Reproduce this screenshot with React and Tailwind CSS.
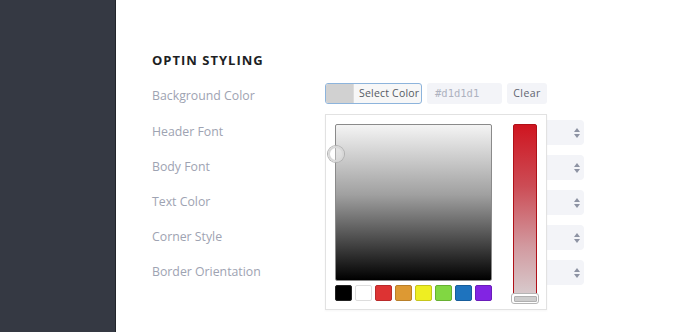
import React from 'react';

const swatches = [
  ['#000000', '#222222'],
  ['#ffffff', '#dddddd'],
  ['#dd3333', '#b92a2a'],
  ['#dd9933', '#b97f2a'],
  ['#eeee22', '#c6c61c'],
  ['#81d742', '#67b032'],
  ['#1e73be', '#175d9b'],
  ['#8224e3', '#6a1dba'],
];

const rows = ['Header Font', 'Body Font', 'Text Color', 'Corner Style', 'Border Orientation'];

function SelectArrows() {
  return (
    <svg width="8" height="12" viewBox="0 0 8 12" className="absolute right-[3px] top-1/2 -translate-y-1/2">
      <path d="M4 1 L7 5 L1 5 Z" fill="#8d93a3" />
      <path d="M4 11 L7 7 L1 7 Z" fill="#8d93a3" />
    </svg>
  );
}

function ColorPopup() {
  return (
    <div className="absolute left-0 top-[31px] z-10 w-[222px] h-[196px] bg-white border border-[#e2e2e2] shadow-[0_1px_2px_rgba(0,0,0,0.04)]">
      <div className="relative flex pl-[9px] pt-[9px]">
        <div className="flex flex-col">
          <div className="w-[157px] h-[157px] rounded-[2px] border border-[#8a8a8a] bg-[linear-gradient(to_bottom,#f4f4f4_0%,#a0a0a0_45%,#000000_100%)]" />
          <div className="flex gap-[3px] mt-[4px]">
            {swatches.map(([c, b]) => (
              <div
                key={c}
                className="w-[17px] h-[16px] rounded-[2px] border"
                style={{ backgroundColor: c, borderColor: b }}
              />
            ))}
          </div>
        </div>
        <div className="relative ml-[21px] w-[24px] h-[176px] rounded-[2px] border border-[#b01018] bg-[linear-gradient(to_bottom,#cf1520_0%,#cc4c55_35%,#d29aa0_70%,#d8cfd1_100%)]" />
        <div className="absolute left-[185px] top-[178px] w-[28px] h-[11px] rounded-[3px] border border-[#b5b5b5] bg-white p-[1.5px]">
          <div className="w-full h-full rounded-[1px] bg-[#cdcdcd] border border-[#b0b0b0]" />
        </div>
        <div className="absolute left-[2px] top-[31px] w-[16px] h-[16px] rounded-full border-2 border-[#d8d8d8] bg-white/30 shadow-[0_0_0_1px_#b0b0b0]" />
      </div>
    </div>
  );
}

export default function App() {
  return (
    <div className="flex w-[700px] h-[332px] bg-white overflow-hidden" style={{ fontFamily: '"Open Sans", sans-serif' }}>
      <div className="w-[116px] h-full bg-[#353943] border-r border-[#22252b]" />
      <div className="flex-1 pl-[36px] pt-[50px]">
        <h2 className="text-[13px] leading-[20px] font-bold tracking-[1px] text-[#1d1f24]">OPTIN STYLING</h2>

        <div className="flex mt-[13px]">
          <div className="w-[173px] text-[12.3px] leading-[21px] mt-[2px] text-[#9ea3b2]">Background Color</div>
          <div className="relative flex gap-[5px]">
            <div className="flex h-[21px] w-[97px] rounded-[3px] border border-[#8db4dc] bg-[#f7f7f7] overflow-hidden">
              <div className="w-[27px] h-full bg-[#d1d1d1]" />
              <div className="flex-1 border-l border-[#dcdcdc] whitespace-nowrap text-[10.5px] leading-[19px] pl-[5px] tracking-[0.2px] text-[#555a63]">Select Color</div>
            </div>
            <div className="h-[21px] w-[75px] rounded-[3px] bg-[#f3f4f8] pl-[8px] text-[10.5px] leading-[21px] text-[#aeb2bf]" style={{ fontFamily: '"DejaVu Sans Mono", monospace' }}>#d1d1d1</div>
            <div className="h-[21px] w-[40px] rounded-[3px] bg-[#f3f4f8] text-center text-[10.5px] leading-[21px] tracking-[0.4px] text-[#5f6470]">Clear</div>
            <ColorPopup />
          </div>
        </div>

        <div className="flex flex-col gap-[10px] mt-[14px]">
          {rows.map((r) => (
            <div key={r} className="flex h-[25px]">
              <div className="w-[173px] text-[12.3px] leading-[24px] text-[#9ea3b2]">{r}</div>
              <div className="relative w-[259px] h-[25px] rounded-[4px] bg-[#f3f4f8]">
                <SelectArrows />
              </div>
            </div>
          ))}
        </div>
      </div>
    </div>
  );
}
